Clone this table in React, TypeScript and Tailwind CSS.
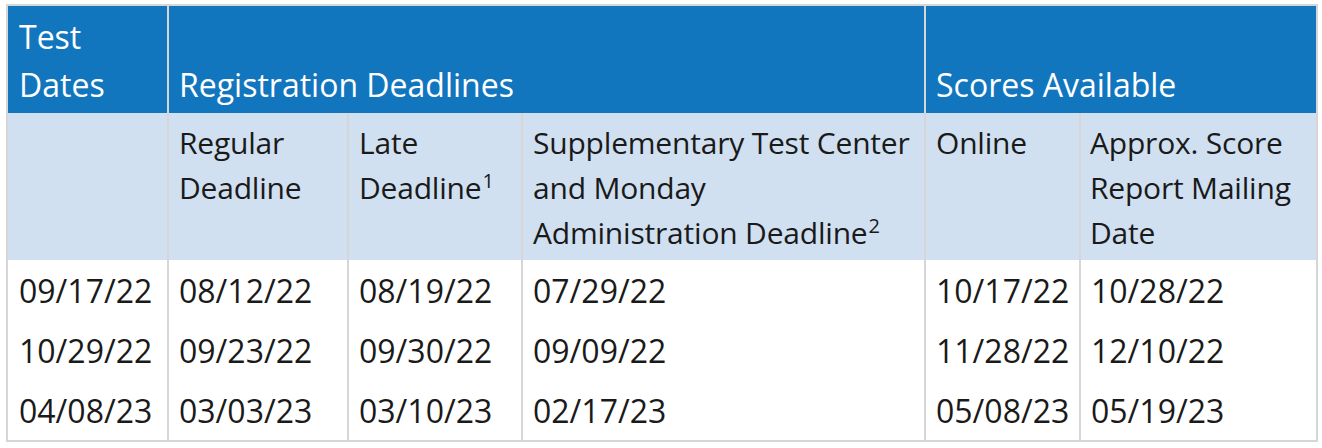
import React from "react";

const rows = [
  ["09/17/22", "08/12/22", "08/19/22", "07/29/22", "10/17/22", "10/28/22"],
  ["10/29/22", "09/23/22", "09/30/22", "09/09/22", "11/28/22", "12/10/22"],
  ["04/08/23", "03/03/23", "03/10/23", "02/17/23", "05/08/23", "05/19/23"],
];

export default function App() {
  return (
    <div className="bg-white w-[1322px] h-[448px] pt-[4px] pl-[6px]" style={{ fontFamily: "'Open Sans', 'Noto Sans', sans-serif" }}>
      <div className="w-[1312px] border-2 border-[#d6d6d6] grid grid-cols-[159px_180px_174px_403px_155px_237px]">
        {/* header row 1 */}
        <div className="bg-[#1276be] text-white text-[32px] leading-[48px] h-[107px] px-[11px] pb-[4px] flex items-end">
          Test Dates
        </div>
        <div className="col-span-3 bg-[#1276be] text-white text-[32px] leading-[48px] h-[107px] border-l-2 border-[#d6d6d6] px-[10px] pb-[4px] flex items-end">
          Registration Deadlines
        </div>
        <div className="col-span-2 bg-[#1276be] text-white text-[32px] leading-[48px] h-[107px] border-l-2 border-[#d6d6d6] px-[10px] pb-[4px] flex items-end">
          Scores Available
        </div>

        {/* header row 2 */}
        <div className="bg-[#d0e0f0] h-[147px]" />
        <div className="bg-[#d0e0f0] border-l-2 border-[#d6d6d6] text-[#1a1a1a] text-[30px] leading-[45px] pl-[10px] pr-[2px] pt-[7px] pb-[5px] tracking-[-0.2px]">
          Regular Deadline
        </div>
        <div className="bg-[#d0e0f0] border-l-2 border-[#d6d6d6] text-[#1a1a1a] text-[30px] leading-[45px] pl-[10px] pr-[2px] pt-[7px] pb-[5px] tracking-[-0.2px]">
          Late Deadline<sup className="text-[20px] relative -top-[11px] ml-[1px]">1</sup>
        </div>
        <div className="bg-[#d0e0f0] border-l-2 border-[#d6d6d6] text-[#1a1a1a] text-[30px] leading-[45px] pl-[10px] pr-[2px] pt-[7px] pb-[5px] tracking-[-0.2px] whitespace-nowrap">
          Supplementary Test Center
          <br />
          and Monday
          <br />
          Administration Deadline<sup className="text-[20px] relative -top-[11px] ml-[1px]">2</sup>
        </div>
        <div className="bg-[#d0e0f0] border-l-2 border-[#d6d6d6] text-[#1a1a1a] text-[30px] leading-[45px] pl-[10px] pr-[2px] pt-[7px] pb-[5px] tracking-[-0.2px]">
          Online
        </div>
        <div className="bg-[#d0e0f0] border-l-2 border-[#d6d6d6] text-[#1a1a1a] text-[30px] leading-[45px] pl-[9px] pr-[2px] pt-[7px] pb-[5px] tracking-[-0.2px]">
          Approx. Score Report Mailing Date
        </div>

        {/* body */}
        {rows.map((r, i) => (
          <React.Fragment key={i}>
            {r.map((c, j) => (
              <div
                key={j}
                className={
                  "text-[#1a1a1a] text-[32px] leading-[48px] pt-[7px] pb-[5px] whitespace-nowrap " +
                  (j === 0 ? "pl-[11px]" : "border-l-2 border-[#d6d6d6] pl-[10px]")
                }
              >
                {c}
              </div>
            ))}
          </React.Fragment>
        ))}
      </div>
    </div>
  );
}
